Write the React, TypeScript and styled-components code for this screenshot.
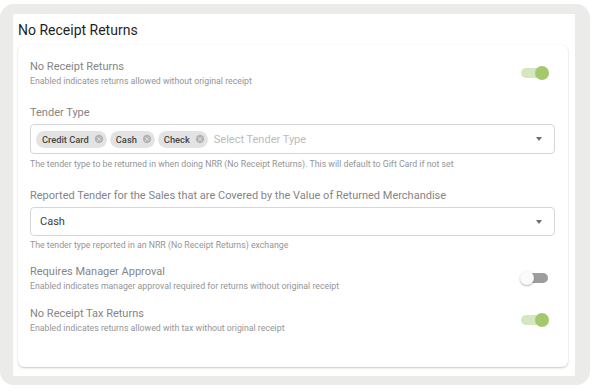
import { createGlobalStyle, styled } from 'styled-components'

const GlobalStyle = createGlobalStyle`
  html, body {
    margin: 0;
    padding: 0;
    background: #ffffff;
    font-family: Roboto, "Liberation Sans", Arial, sans-serif;
  }
`

const Frame = styled.div`
  box-sizing: border-box;
  width: 590px;
  height: 381px;
  margin-top: 4px;
  background: #ffffff;
  border-style: solid;
  border-color: #ebebea;
  border-width: 10px 15px 9px 13px;
  border-radius: 14px;
  display: flex;
  flex-direction: column;
`

const Title = styled.div`
  height: 31px;
  display: flex;
  align-items: center;
  padding-left: 5px;
  font-size: 14px;
  color: #1f1f1f;
`

const Card = styled.div`
  margin: 0 7px 0 5px;
  padding: 13px 13px 33px 12px;
  background: #ffffff;
  border-radius: 6px;
  box-shadow: 0 1px 2px rgba(0, 0, 0, 0.22), 0 0 1px rgba(0, 0, 0, 0.06);
  display: flex;
  flex-direction: column;
`

const ToggleRow = styled.div<{ $gap?: number }>`
  display: flex;
  align-items: center;
  justify-content: space-between;
  margin-top: ${p => p.$gap ?? 0}px;
`

const Field = styled.div<{ $gap?: number }>`
  display: flex;
  flex-direction: column;
  margin-top: ${p => p.$gap ?? 0}px;
`

const Label = styled.div`
  font-size: 11px;
  line-height: 17px;
  color: #858585;
`

const Helper = styled.div<{ $gap?: number }>`
  font-size: 8.75px;
  line-height: 12px;
  color: #959595;
  margin-top: ${p => p.$gap ?? 0}px;
`

const SelectBox = styled.div<{ $h: number }>`
  box-sizing: border-box;
  height: ${p => p.$h}px;
  margin-top: 3px;
  border: 1px solid #d6d6d6;
  border-radius: 4px;
  display: flex;
  align-items: center;
  padding: 0 12px 0 5px;
  gap: 3px;
`

const Chip = styled.div`
  height: 17px;
  display: flex;
  align-items: center;
  gap: 5px;
  padding: 0 3px 0 6px;
  border-radius: 9px;
  background: #e3e3e3;
  font-size: 9.3px;
  font-weight: 500;
  color: #474747;
`

const Placeholder = styled.div`
  margin-left: 3px;
  font-size: 11px;
  color: #bcbcbc;
  flex: 1;
`

const Value = styled.div`
  padding-left: 4px;
  font-size: 11px;
  color: #3d3d3d;
  flex: 1;
`

const Arrow = styled.div`
  width: 0;
  height: 0;
  border-left: 3.5px solid transparent;
  border-right: 3.5px solid transparent;
  border-top: 4px solid #6f6f6f;
`

const Switch = styled.div`
  position: relative;
  width: 30px;
  height: 16px;
  margin-right: 5px;
  flex-shrink: 0;
`

const Track = styled.div<{ $on: boolean }>`
  position: absolute;
  left: 1px;
  right: 2px;
  top: 3px;
  height: 10px;
  border-radius: 5px;
  background: ${p => (p.$on ? '#d4e7c1' : '#9d9d9d')};
`

const Thumb = styled.div<{ $on: boolean }>`
  position: absolute;
  top: 1px;
  left: ${p => (p.$on ? 15 : 0)}px;
  width: 14px;
  height: 14px;
  border-radius: 50%;
  background: ${p => (p.$on ? '#a3c96c' : '#fafafa')};
  box-shadow: ${p => (p.$on ? 'none' : '0 1px 2px rgba(0,0,0,0.3)')};
`

const Toggle = ({ on }: { on: boolean }) => (
  <Switch>
    <Track $on={on} />
    <Thumb $on={on} />
  </Switch>
)

const ChipDelete = () => (
  <svg width="10" height="10" viewBox="0 0 24 24">
    <path
      fill="#b3b3b3"
      d="M12 2C6.47 2 2 6.47 2 12s4.47 10 10 10 10-4.47 10-10S17.53 2 12 2zm5 13.59L15.59 17 12 13.41 8.41 17 7 15.59 10.59 12 7 8.41 8.41 7 12 10.59 15.59 7 17 8.41 13.41 12 17 15.59z"
    />
  </svg>
)

const TextBlock = styled.div`
  display: flex;
  flex-direction: column;
`

const App = () => {
  return (
    <>
      <GlobalStyle />
      <Frame>
        <Title>No Receipt Returns</Title>
        <Card>
          <ToggleRow>
            <TextBlock>
              <Label>No Receipt Returns</Label>
              <Helper>Enabled indicates returns allowed without original receipt</Helper>
            </TextBlock>
            <Toggle on />
          </ToggleRow>

          <Field $gap={17}>
            <Label>Tender Type</Label>
            <SelectBox $h={30}>
              {['Credit Card', 'Cash', 'Check'].map(t => (
                <Chip key={t}>
                  {t}
                  <ChipDelete />
                </Chip>
              ))}
              <Placeholder>Select Tender Type</Placeholder>
              <Arrow />
            </SelectBox>
            <Helper $gap={4}>
              The tender type to be returned in when doing NRR (No Receipt Returns). This will default to Gift Card if not set
            </Helper>
          </Field>

          <Field $gap={17}>
            <Label>Reported Tender for the Sales that are Covered by the Value of Returned Merchandise</Label>
            <SelectBox $h={29}>
              <Value>Cash</Value>
              <Arrow />
            </SelectBox>
            <Helper $gap={3}>The tender type reported in an NRR (No Receipt Returns) exchange</Helper>
          </Field>

          <ToggleRow $gap={12}>
            <TextBlock>
              <Label>Requires Manager Approval</Label>
              <Helper>Enabled indicates manager approval required for returns without original receipt</Helper>
            </TextBlock>
            <Toggle on={false} />
          </ToggleRow>

          <ToggleRow $gap={13}>
            <TextBlock>
              <Label>No Receipt Tax Returns</Label>
              <Helper>Enabled indicates returns allowed with tax without original receipt</Helper>
            </TextBlock>
            <Toggle on />
          </ToggleRow>
        </Card>
      </Frame>
    </>
  )
}

export default App
